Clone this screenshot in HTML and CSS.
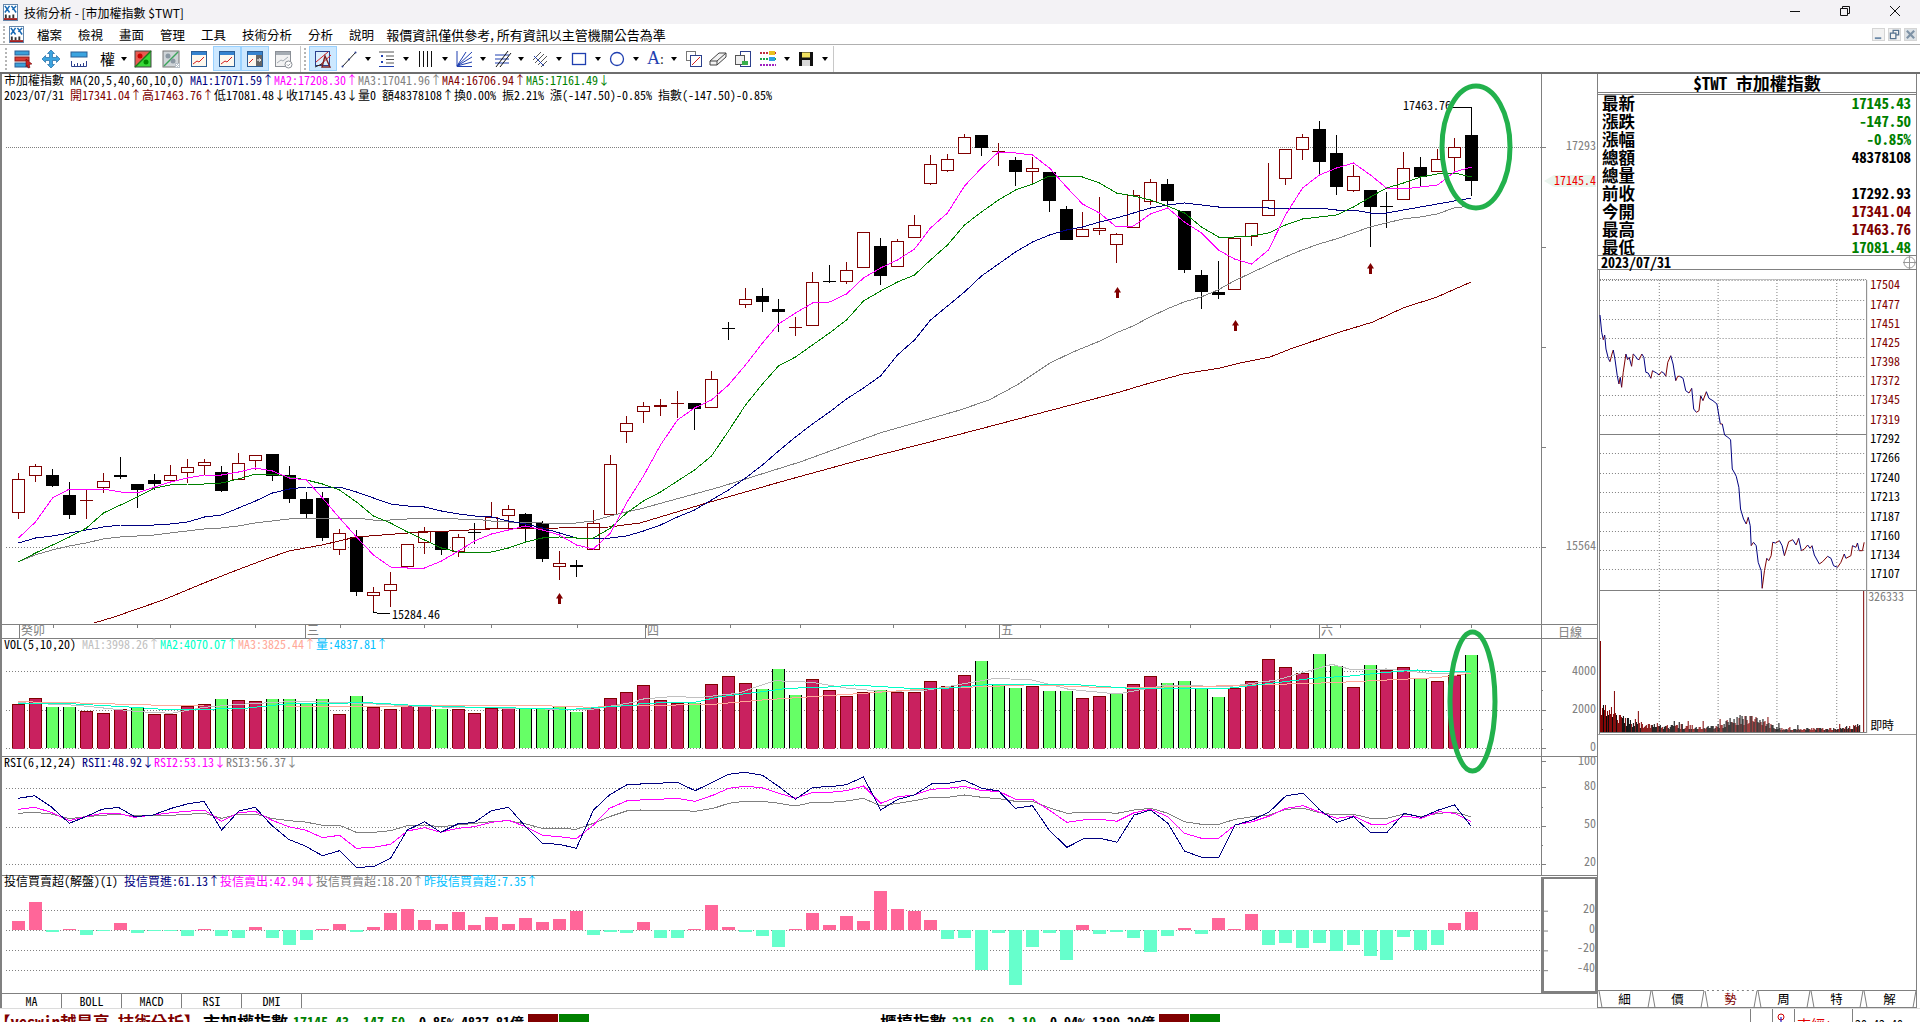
FILE: index.html
```html
<!DOCTYPE html>
<html lang="zh-Hant">
<head>
<meta charset="utf-8">
<title>技術分析 - [市加權指數 $TWT]</title>
<link rel="stylesheet" href="styles.css">
</head>
<body>
<svg class="defs" width="0" height="0">
  <symbol id="app" viewBox="0 0 16 18">
    <rect x=".5" y=".5" width="15" height="17" fill="#fff" stroke="#5b7fa6"/>
    <path d="M2 2l5 7M7 2L2 9M9 2l5 7M14 2l-4 4" stroke="#1769b5" stroke-width="1.6" fill="none"/>
    <path d="M2 15V11h2v4zM6 15v-3h2v3zM10 15v-4h2v4z" fill="#333"/>
    <rect x="1" y="15" width="14" height="2" fill="#a02020"/>
  </symbol>
  <symbol id="win" viewBox="0 0 20 20">
    <rect x="2.5" y="2.5" width="15" height="15" fill="#fdf8ee" stroke="#2b5e96"/>
    <rect x="3" y="3" width="14" height="3" fill="#3583cf"/>
    <path d="M4 15l4-3 2 1 5-5" stroke="#d62020" fill="none"/>
  </symbol>
  <symbol id="caret" viewBox="0 0 8 8"><path d="M1 2h6L4 6z" fill="#000"/></symbol>
</svg>

<header class="titlebar">
  <svg class="app-ico"><use href="#app"/></svg>
  <span class="title-text">技術分析 - [市加權指數 $TWT]</span>
  <div class="winctl">
    <svg viewBox="0 0 10 10"><path d="M0 5.5h10" stroke="#111"/></svg>
    <svg viewBox="0 0 10 10"><path d="M.5 2.5h7v7h-7zM2.5 2.5V.5h7v7h-2" fill="none" stroke="#111"/></svg>
    <svg viewBox="0 0 10 10"><path d="M0 0l10 10M10 0L0 10" stroke="#111"/></svg>
  </div>
</header>

<nav class="menubar">
  <span class="grip"></span>
  <svg class="app-ico"><use href="#app"/></svg>
  <span class="menu first">檔案</span><span class="menu">檢視</span><span class="menu">畫面</span><span class="menu">管理</span><span class="menu">工具</span><span class="menu">技術分析</span><span class="menu">分析</span><span class="menu">說明</span>
  <span class="menu notice">報價資訊僅供參考, 所有資訊以主管機關公告為準</span>
  <div class="mdi">
    <span class="mdi-btn"><svg viewBox="0 0 12 12"><path d="M2 9h7v2H2z" fill="#6c8aa8"/></svg></span>
    <span class="mdi-btn"><svg viewBox="0 0 12 12"><path d="M1.5 4.5h6v6h-6zM4.5 4.5v-3h6v5h-3" fill="none" stroke="#55728f" stroke-width="1.4"/></svg></span>
    <span class="mdi-btn on"><svg viewBox="0 0 12 12"><path d="M2 2l8 8M10 2l-8 8" stroke="#7f93a6" stroke-width="2.4"/></svg></span>
  </div>
</nav>

<div class="toolbar">
  <span class="grip"></span>
  <span class="tb"><svg viewBox="0 0 20 20"><rect x="2" y="2" width="14" height="4" fill="#39a0d8" stroke="#2b5e96"/><rect x="2" y="8" width="14" height="4" fill="#d83a32" stroke="#8a1c1c"/><rect x="2" y="14" width="14" height="4" fill="#39a0d8" stroke="#2b5e96"/><path d="M13 10l6 5-3 .5 1 3-2 .5-1-3-1 2z" fill="#c22" stroke="#600" stroke-width=".5"/></svg></span>
  <span class="tb"><svg viewBox="0 0 20 20"><path d="M10 1l3.500 3.500H11.500V8.500H15.500V6.500L19 10l-3.500 3.500V11.500H11.500V15.500H13.500L10 19l-3.500-3.500H8.500V11.500H4.500V13.500L1 10l3.500-3.500V8.500H8.500V4.500H6.500z" fill="#3ba4e0" stroke="#1f6aa5" stroke-width=".7"/></svg></span>
  <span class="tb"><svg viewBox="0 0 20 20"><rect x="2" y="3" width="16" height="5" fill="#3ba4e0" stroke="#2b5e96"/><path d="M2.500 12v5.500h15V12M5.500 17v-2M8.500 17v-3M11.500 17v-2M14.500 17v-3" fill="none" stroke="#2b3f8c"/></svg></span>
  <span class="tb dd narrow"><span class="tb-txt">權</span><svg class="caret"><use href="#caret"/></svg></span>
  <span class="tb"><svg viewBox="0 0 20 20"><path d="M2 2h16L2 18z" fill="#e85a50"/><path d="M18 2v16H2z" fill="#38d838"/><rect x="2" y="2" width="16" height="16" fill="none" stroke="#444"/><path d="M2 18L18 2" stroke="#1a7a1a" stroke-width="1.400"/><circle cx="7" cy="7" r="2.500" fill="#c00"/><circle cx="13" cy="13" r="2.500" fill="#080"/></svg></span>
  <span class="tb"><svg viewBox="0 0 20 20"><rect x="2" y="2" width="16" height="16" fill="#cfd4d8" stroke="#777"/><path d="M3 17L17 3" stroke="#3ba35a" stroke-width="1.400"/><circle cx="7" cy="7" r="2.500" fill="#8b98a3"/><circle cx="12" cy="12" r="2.500" fill="#8b98a3"/><path d="M14 14h5v5h-5z" fill="#b8c0c8"/><path d="M15 15l3 3M18 15l-3 3" stroke="#fff"/></svg></span>
  <span class="tb"><svg viewBox="0 0 20 20"><use href="#win"/></svg></span>
  <span class="tb on"><svg viewBox="0 0 20 20"><use href="#win"/></svg></span>
  <span class="tb on"><svg viewBox="0 0 20 20"><rect x="2.500" y="2.500" width="15" height="15" fill="#fdf8ee" stroke="#2b5e96"/><rect x="3" y="3" width="14" height="3" fill="#3583cf"/><rect x="11" y="6" width="6" height="11" fill="#666"/><path d="M4 14l4-4" stroke="#d62020"/><path d="M12 11h3M14 9.500l2 1.500-2 1.500" stroke="#fff" fill="none"/></svg></span>
  <span class="tb"><svg viewBox="0 0 20 20"><rect x="2.500" y="2.500" width="15" height="15" fill="#f2f2f2" stroke="#8a8f96"/><rect x="3" y="3" width="14" height="3" fill="#a5acb3"/><path d="M4 14l4-3 2 1 5-4" stroke="#a5acb3" fill="none"/><circle cx="15.500" cy="15.500" r="3.500" fill="#fff" stroke="#8a8f96"/><path d="M14 15.500l1.200 1.200 2-2" stroke="#8a8f96" fill="none"/></svg></span>
  <span class="sep"></span>
  <span class="grip"></span>
  <span class="tb on"><svg viewBox="0 0 20 20"><rect x="2.500" y="2.500" width="14" height="14" fill="#dbeefc" stroke="#2b3f8c"/><path d="M3 13L15 3M6 17L18 6" stroke="#d62020"/><path d="M12 7l5 11H9z" fill="none" stroke="#7a2020" stroke-width="1.400"/><path d="M2 18l7-3" stroke="#222"/></svg></span>
  <span class="tb dd"><svg viewBox="0 0 20 20"><path d="M3 18L17 3" stroke="#222"/><circle cx="3.500" cy="17.500" r="1" fill="#2b3f8c"/><circle cx="10" cy="10.500" r="1" fill="#2b3f8c"/><circle cx="16.500" cy="3.500" r="1" fill="#2b3f8c"/></svg><svg class="caret"><use href="#caret"/></svg></span>
  <span class="tb dd"><svg viewBox="0 0 20 20"><path d="M2 3h15M9 7h8M9 10.500h8M9 14h8" stroke="#555"/><path d="M2 17.500h15" stroke="#1f3fb0"/><path d="M4 6l2 2M4 8l2-2M4 12l2 2M4 14l2-2" stroke="#1f3fb0"/></svg><svg class="caret"><use href="#caret"/></svg></span>
  <span class="tb dd"><svg viewBox="0 0 20 20"><path d="M3.500 2v16M7.500 2v16M11.500 2v16M15.500 2v16" stroke="#111"/></svg><svg class="caret"><use href="#caret"/></svg></span>
  <span class="tb dd"><svg viewBox="0 0 20 20"><path d="M3 2v15.500h15" stroke="#1f3fb0" fill="none"/><path d="M3 17L18 3M3 17L18 8M3 17L18 13M3 17L12 3" stroke="#1f3fb0"/></svg><svg class="caret"><use href="#caret"/></svg></span>
  <span class="tb dd"><svg viewBox="0 0 20 20"><path d="M3 6h14M3 10h14M3 14h14" stroke="#1f3fb0"/><path d="M4 18L16 2M8 18L19 4" stroke="#111"/></svg><svg class="caret"><use href="#caret"/></svg></span>
  <span class="tb dd"><svg viewBox="0 0 20 20"><path d="M3 11L11 3M5 14L14 5M8 16l9-9M11 18l6-6" stroke="#555"/><path d="M4 7l10 10" stroke="#1f3fb0"/></svg><svg class="caret"><use href="#caret"/></svg></span>
  <span class="tb dd"><svg viewBox="0 0 20 20"><rect x="3.500" y="4.500" width="13" height="11" fill="none" stroke="#1f3fb0" stroke-width="1.300"/></svg><svg class="caret"><use href="#caret"/></svg></span>
  <span class="tb dd"><svg viewBox="0 0 20 20"><circle cx="10" cy="10" r="6.500" fill="none" stroke="#1f3fb0" stroke-width="1.300"/></svg><svg class="caret"><use href="#caret"/></svg></span>
  <span class="tb dd"><span class="tb-a">A<i>:</i></span><svg class="caret"><use href="#caret"/></svg></span>
  <span class="tb single"><svg viewBox="0 0 20 20"><rect x="2.500" y="2.500" width="9" height="9" fill="#fff" stroke="#777"/><rect x="6.500" y="6.500" width="11" height="11" fill="#fff" stroke="#2b3f8c"/><path d="M8 16l8-8" stroke="#d62020"/></svg></span>
  <span class="tb tight"><svg viewBox="0 0 20 20"><path d="M2 12l9-8h7v4l-9 8H2z" fill="#f2f2f2" stroke="#444"/><path d="M2 12h7v4M9 12l9-8" fill="none" stroke="#444"/></svg></span>
  <span class="tb tight"><svg viewBox="0 0 20 20"><rect x="7.500" y="2.500" width="10" height="15" fill="#fff" stroke="#2b3f8c"/><rect x="2.500" y="6.500" width="9" height="9" fill="#eee" stroke="#555"/><path d="M9 12h6v4H9z" fill="#38b04a"/></svg></span>
  <span class="tb dd"><svg viewBox="0 0 20 20"><g stroke-width="2" stroke-dasharray="2 1"><path d="M2 4h16" stroke="#c03040"/><path d="M2 10h16" stroke="#1aa64a"/><path d="M2 16h16" stroke="#a020c0"/></g><path d="M11 2h6v4h-6z" fill="#e8c020"/><path d="M11 8h6v4h-6z" fill="#2aa0e0"/></svg><svg class="caret"><use href="#caret"/></svg></span>
  <span class="tb dd"><svg viewBox="0 0 20 20"><rect x="3" y="3" width="14" height="14" fill="#111"/><rect x="6" y="3.500" width="8" height="5" fill="#f0e060"/><rect x="6" y="11" width="8" height="6" fill="#d8d8d8"/></svg><svg class="caret"><use href="#caret"/></svg></span>
  <span class="sep end"></span>
</div>

<main class="workspace">
  <section class="charts">
    <div class="pane pane-main">
      <div class="plot">
        <svg id="mainPlot" viewBox="2 74 1539 550" preserveAspectRatio="none"></svg>
        <div class="legend">市加權指數 MA(20,5,40,60,10,0) <span class="c-navy">MA1:17071.59↑</span><span class="c-mag">MA2:17208.30↑</span><span class="c-gray">MA3:17041.96↑</span><span class="c-dred">MA4:16706.94↑</span><span class="c-green">MA5:17161.49↓</span></div>
        <div class="legend">2023/07/31 <span class="c-dred">開17341.04↑高17463.76↑</span>低17081.48↓收17145.43↓量0 額48378108↑換0.00% 振2.21% 漲(-147.50)-0.85% 指數(-147.50)-0.85%</div>
      </div>
      <div class="axis"><svg id="mainAxis" viewBox="1542 74 55 550" preserveAspectRatio="none"></svg></div>
    </div>
    <div class="pane pane-date">
      <div class="plot"><svg id="datePlot" viewBox="2 625 1539 13" preserveAspectRatio="none"></svg></div>
      <div class="axis daily">日線</div>
    </div>
    <div class="pane pane-sub pane-vol">
      <div class="plot">
        <svg id="volPlot" viewBox="2 639 1539 117" preserveAspectRatio="none"></svg>
        <div class="legend">VOL(5,10,20) <span class="c-silver">MA1:3998.26↑</span><span class="c-cyan">MA2:4070.07↑</span><span class="c-salmon">MA3:3825.44↑</span><span class="c-sky">量:4837.81↑</span></div>
      </div>
      <div class="axis"><svg id="volAxis" viewBox="1542 639 55 117" preserveAspectRatio="none"></svg></div>
    </div>
    <div class="pane pane-sub pane-rsi">
      <div class="plot">
        <svg id="rsiPlot" viewBox="2 757 1539 118" preserveAspectRatio="none"></svg>
        <div class="legend">RSI(6,12,24) <span class="c-navy">RSI1:48.92↓</span><span class="c-mag">RSI2:53.13↓</span><span class="c-gray">RSI3:56.37↓</span></div>
      </div>
      <div class="axis"><svg id="rsiAxis" viewBox="1542 757 55 118" preserveAspectRatio="none"></svg></div>
    </div>
    <div class="pane pane-sub pane-inst">
      <div class="plot">
        <svg id="instPlot" viewBox="2 876 1539 117" preserveAspectRatio="none"></svg>
        <div class="legend">投信買賣超(解盤)(1) <span class="c-navy">投信買進:61.13↑</span><span class="c-mag">投信賣出:42.94↓</span><span class="c-gray">投信買賣超:18.20↑</span><span class="c-sky">昨投信買賣超:7.35↑</span></div>
      </div>
      <div class="axis boxed"><svg id="instAxis" viewBox="1544 878 51 113" preserveAspectRatio="none"></svg></div>
    </div>
    <div class="ind-tabs">
      <span class="ind-tab">MA</span><span class="ind-tab">BOLL</span><span class="ind-tab">MACD</span><span class="ind-tab">RSI</span><span class="ind-tab">DMI</span>
    </div>
    <svg class="marks" viewBox="0 74 1597 934" preserveAspectRatio="none">
      <ellipse cx="1476" cy="147" rx="34" ry="61"/>
      <ellipse cx="1472.500" cy="701.500" rx="22.500" ry="69.500"/>
    </svg>
  </section>

  <aside class="side">
    <h2 class="q-title">$TWT 市加權指數</h2>
    <dl class="quote">
      <div class="q-row"><dt>最新</dt><dd class="c-green">17145.43</dd></div>
      <div class="q-row"><dt>漲跌</dt><dd class="c-green">-147.50</dd></div>
      <div class="q-row"><dt>漲幅</dt><dd class="c-green">-0.85%</dd></div>
      <div class="q-row"><dt>總額</dt><dd>48378108</dd></div>
      <div class="q-row"><dt>總量</dt><dd></dd></div>
      <div class="q-row"><dt>前收</dt><dd>17292.93</dd></div>
      <div class="q-row"><dt>今開</dt><dd class="c-dred">17341.04</dd></div>
      <div class="q-row"><dt>最高</dt><dd class="c-dred">17463.76</dd></div>
      <div class="q-row"><dt>最低</dt><dd class="c-green">17081.48</dd></div>
    </dl>
    <div class="q-date"><span>2023/07/31</span>
      <svg viewBox="0 0 13 13"><circle cx="6.500" cy="6.500" r="5.500" fill="none" stroke="#999"/><path d="M6.500 0v13M0 6.500h13" stroke="#999"/></svg>
    </div>
    <div class="mini"><svg id="mini" viewBox="1598 271 319 464" preserveAspectRatio="none"></svg></div>
    <div class="side-blank"></div>
    <div class="side-tabs">
      <svg viewBox="0 0 319 18" preserveAspectRatio="none"><path id="tabLines" d=""/><path id="tabActive" d=""/></svg>
      <span class="s-tab">細</span><span class="s-tab">價</span><span class="s-tab active">勢</span><span class="s-tab">周</span><span class="s-tab">特</span><span class="s-tab">解</span>
    </div>
  </aside>
</main>

<footer class="status">
  <span class="st-brand">【yeswin越是高-技術分析】</span>
  <span class="st-name">市加權指數</span>
  <span class="st-num"><span class="c-green">17145.43 -147.50</span> -0.85% 4837.81億</span>
  <span class="st-bars"><i class="b-red"></i><i class="b-green"></i></span>
  <span class="st-name second">櫃檯指數</span>
  <span class="st-num"><span class="c-green">221.69 -2.10</span> -0.94% 1389.20億</span>
  <span class="st-bars small"><i class="b-red"></i><i class="b-green"></i></span>
  <span class="st-right">
    <span class="st-cell w22"></span>
    <span class="st-cell w22"><svg viewBox="0 0 12 12"><circle cx="6" cy="4" r="3" fill="none" stroke="#c00"/><path d="M6 4v7" stroke="#00c"/></svg></span>
    <span class="st-cell w58 c-red">東經+</span>
    <span class="st-cell">20:42:40</span>
  </span>
</footer>
<script src="chart.js"></script>
</body>
</html>
```
FILE: styles.css
```css
* { box-sizing: border-box; }
html, body { margin: 0; padding: 0; }
body {
  width: 1920px; height: 1022px; overflow: hidden; background: #fff; color: #000;
  display: flex; flex-direction: column;
  font: 12px/15px "Noto Sans CJK TC", "Liberation Mono", monospace;
  font-feature-settings: "hwid";
}
.defs { position: absolute; }
svg text { font: 12px "Noto Sans CJK TC", "Liberation Mono", monospace; font-feature-settings: "hwid"; }
.ln { fill: none; stroke-width: 1; shape-rendering: crispEdges; }

.titlebar { height: 24px; flex: none; background: #f3f2f5; display: flex; align-items: center; padding-left: 3px; font-feature-settings: normal; }
.app-ico { width: 15px; height: 17px; flex: none; }
.title-text { margin-left: 6px; font-size: 12px; }
.winctl { margin-left: auto; display: flex; }
.winctl svg { width: 10px; height: 10px; margin: 0 20px 2px 20px; }
.winctl svg:last-child { margin-right: 20px; }

.menubar { height: 21px; flex: none; display: flex; align-items: center; padding-left: 3px; border-bottom: 1px solid #b0b0b0; font-feature-settings: normal; }
.menubar .app-ico { margin-left: 4px; }
.menu { font-size: 12.500px; margin-left: 16px; white-space: nowrap; }
.menu.first { margin-left: 13px; }
.menu.notice { font-size: 13px; margin-left: 12px; }
.grip { width: 2px; height: 17px; flex: none; border-left: 2px dotted #b5b5b5; }
.mdi { margin-left: auto; margin-right: 3px; display: flex; gap: 3px; padding-top: 1px; }
.mdi-btn { width: 13px; height: 13px; border: 1px solid #d5d5d5; background: #f2f2f2; display: flex; }
.mdi-btn.on { background: #dde2e6; }
.mdi-btn svg { width: 11px; height: 11px; }

.toolbar { height: 27px; flex: none; display: flex; align-items: center; padding-left: 5px; }
.toolbar > .grip { height: 22px; margin-right: 2px; }
.tb { height: 25px; width: 28px; flex: none; display: flex; align-items: center; justify-content: center; border: 1px solid transparent; }
.tb svg { width: 20px; height: 20px; flex: none; }
.tb.on { background: #cce8ff; border-color: #99d1ff; }
.tb.dd { width: 38.300px; justify-content: flex-start; padding-left: 1px; }
.tb.narrow { width: 36px; padding-left: 6px; }
.tb .caret { width: 8px; height: 8px; margin-left: 5px; }
.tb.single { width: 24px; }
.tb.tight { width: 25px; }
.tb-txt { font-size: 15px; line-height: 20px; width: 20px; text-align: center; font-feature-settings: normal; }
.tb-a { width: 20px; font: 18px/20px "Liberation Serif", serif; color: #1f3fb0; text-align: center; }
.tb-a i { font-style: normal; color: #222; font-size: 14px; }
.sep { width: 1px; height: 26px; background: #c8c8c8; margin: 0 3px; flex: none; }
.toolbar > .sep + .grip { margin-right: 3px; }
.sep.end { margin-left: 1px; }

.workspace { height: 936px; flex: none; display: flex; border-top: 2px solid #6e6e6e; }
.charts { width: 1597px; flex: none; display: flex; flex-direction: column; position: relative; border-left: 2px solid #808080; }
.pane { display: flex; flex: none; border-bottom: 1px solid #808080; }
.pane-main { height: 551px; }
.pane-date { height: 14px; }
.pane-vol { height: 118px; }
.pane-rsi { height: 119px; }
.pane-inst { height: 118px; }
.plot { width: 1539px; flex: none; position: relative; padding-left: 2px; }
.plot svg { position: absolute; left: 0; top: 0; width: 100%; height: 100%; }
.axis { width: 56px; flex: none; border-left: 1px solid #808080; position: relative; color: #808080; }
.axis svg { position: absolute; left: 0; top: 0; width: 100%; height: 100%; }
.axis.daily { text-align: center; padding-left: 1px; line-height: 13px; }
.axis.boxed { border: 2px solid #808080; border-left-width: 3px; margin: 1px 0 0 0; }
.legend { position: relative; white-space: pre; line-height: 14.500px; top: -1px; }
.pane-sub .legend { line-height: 13px; top: -2px; }

.ind-tabs { flex: 1; display: flex; }
.ind-tab { width: 60px; border-right: 1px solid #808080; text-align: center; line-height: 14px; }
.marks { position: absolute; left: -2px; top: 0; width: 1597px; height: 934px; pointer-events: none; }
.marks ellipse { fill: none; stroke: #22b14c; stroke-width: 5; }

.side { width: 320px; flex: none; border-left: 1px solid #808080; border-right: 1px solid #808080; display: flex; flex-direction: column; }
.q-title { margin: 0; height: 19px; font-size: 17px; line-height: 17px; font-weight: 700; text-align: center; border-bottom: 1px solid #808080; }
.quote { margin: 1px 0 0 0; height: 161px; border-top: 1px solid #808080; display: grid; grid-template-rows: repeat(9, 1fr); }
.q-row { display: flex; justify-content: space-between; align-items: center; padding: 0 5px 2px 4px; }
.q-row dt { font-size: 16.500px; font-weight: 700; line-height: 16px; }
.q-row dd { margin: 0; font-size: 15px; font-weight: 700; letter-spacing: -.1px; line-height: 16px; }
.q-date { height: 15px; flex: none; border-top: 1px solid #808080; border-bottom: 1px solid #808080; display: flex; justify-content: space-between; align-items: center; padding-left: 3px; font-size: 14px; font-weight: 700; }
.q-date svg { width: 13px; height: 13px; }
.mini { height: 464px; flex: none; position: relative; }
.mini svg { position: absolute; left: 0; top: 0; width: 100%; height: 100%; }
.side-blank { flex: 1; border-top: 1px solid #9a9a9a; }
.side-tabs { height: 18px; flex: none; position: relative; display: flex; }
.side-tabs svg { position: absolute; left: 0; top: 0; width: 100%; height: 100%; }
.side-tabs path { fill: none; stroke: #808080; shape-rendering: crispEdges; }
.side-tabs #tabActive { stroke: #fff; stroke-dasharray: 3 2; }
.s-tab { flex: 1; text-align: center; line-height: 18px; position: relative; font-size: 12.500px; }
.s-tab.active { color: #800000; }

.status { height: 14px; flex: none; border-top: 1px solid #dcdcdc; display: flex; align-items: flex-start; overflow: hidden; position: relative; font-weight: 700; white-space: nowrap; }
.st-brand { color: #800000; font-size: 16.500px; line-height: 20px; width: 209px; margin-left: -6px; flex: none; margin-top: 3px; }
.st-name { font-size: 17px; line-height: 20px; margin-top: 3px; width: 90px; flex: none; }
.st-name.second { font-size: 16.500px; width: 72px; margin-left: 291px; }
.st-num { font-size: 14px; line-height: 20px; margin-top: 3px; }
.st-bars { display: flex; margin: 5px 0 0 4px; gap: 1px; }
.st-bars i { width: 30px; height: 8px; display: block; }
.b-red { background: #800000; }
.b-green { background: #008000; }
.st-right { position: absolute; left: 1750px; top: 0; display: flex; height: 14px; font-weight: 400; }
.st-cell { border-left: 1px solid #808080; padding-left: 2px; line-height: 20px; padding-top: 5px; font-size: 12px; }
.st-cell svg { width: 12px; height: 12px; display: block; margin-top: -1px; }
.w22 { width: 22px; }
.w58 { width: 58px; font-size: 14px; }

.c-navy { color: #000080; }
.c-mag { color: #ff00ff; }
.c-gray { color: #808080; }
.c-dred { color: #800000; }
.c-green { color: #008000; }
.c-red { color: #e00000; }
.c-silver { color: #c0c0c0; }
.c-cyan { color: #00ffc8; }
.c-salmon { color: #ffa898; }
.c-sky { color: #00bfff; }
```
FILE: chart.js
```js
// Price and indicator data, given in screen pixels of the chart.
const R = '#800000', B = '#000';
const X = i => Math.round(18.4 + 16.89 * i);
const z3 = (p) => [p[0] / 2.45, 600 + p[1] / 3];
const z8 = (p) => [640 + p[0] / 1.633, 640 + p[1] / 3];

// [kind, bodyTop, bodyBottom, wickTop, wickBottom]
const candles = [
['r',479,512,473,519],['r',466,475,464,482],['b',475,486,469,487],['b',495,515,482,519],['r',500,500,490,519],
['r',481,487,473,493],['b',475,477,457,479],['b',484,490,484,508],['b',480,484,474,490],['r',475,480,465,483],
['r',467,472,459,483],['r',462,465,459,475],['b',472,491,466,492],['r',463,479,453,480],['r',455,460,455,470],
['b',454,476,454,481],['b',475,499,466,503],['b',499,514,492,518],['b',498,538,492,541],['r',533,549,529,555],
['b',537,592,530,596],['r',592,595,587,612],['r',584,590,572,607],['r',544,566,544,566],['r',531,542,527,554],
['b',532,550,532,555],['r',537,551,534,557],['b',532,532,523,544],['r',517,528,502,528],['r',509,515,505,529],
['b',514,529,513,543],['b',523,559,521,562],['r',563,566,551,580],['b',565,567,560,577],['r',523,549,510,549],
['r',464,514,455,514],['r',423,431,416,443],['r',406,411,402,423],['r',405,406,399,416],['r',403,403,391,418],
['b',403,409,403,430],['r',379,407,371,407],['b',328,328,322,340],['r',299,304,288,308],['b',296,302,288,312],
['b',309,312,299,332],['r',327,327,317,336],['r',282,325,272,325],['b',281,281,265,283],['r',270,281,262,284],
['r',232,267,232,267],['b',246,276,238,285],['r',241,266,239,266],['r',225,237,215,237],['r',164,183,155,185],
['r',159,170,154,172],['r',137,153,134,153],['b',135,148,135,156],['r',151,151,143,166],['b',160,172,157,186],
['r',168,171,157,184],['b',172,201,172,212],['b',209,240,206,240],['r',229,236,212,237],['r',228,230,197,235],
['r',234,244,233,263],['r',195,227,190,227],['r',182,201,179,205],['b',184,201,179,207],['b',211,270,211,273],
['b',275,292,270,309],['b',292,295,261,299],['r',238,289,238,289],['r',223,236,223,246],['r',200,215,163,215],
['r',149,178,149,185],['r',137,149,134,160],['b',129,162,121,175],['b',153,187,135,195],['r',176,190,165,192],
['b',190,207,190,247],['b',206,206,192,228],['r',168,199,152,199],['b',167,177,157,186],['r',159,171,149,171],
['r',147,157,138,172],['b',135,181,107,196]];

const ma2 = [538,522,498,489,489,489,492,493,487,482,478,475,475,472,468,471,478,480,498,518,537,555,567,568,568,561,551,541,534,530,526,530,535,545,549,533,503,476,445,420,408,400,385,365,343,324,313,303,302,294,278,268,260,249,228,213,186,168,152,153,155,168,187,204,213,227,226,214,208,222,233,250,259,264,250,215,188,175,168,163,175,188,189,187,185,172,167];
const ma5 = [562,553,545,537,528,513,505,497,488,485,484,484,483,479,474,474,477,480,484,490,502,516,523,532,540,548,552,553,552,548,542,538,537,538,538,528,513,501,492,481,470,456,431,405,384,366,357,345,333,320,301,291,282,275,260,245,225,212,200,190,184,176,176,177,183,193,196,200,206,213,227,237,237,236,233,225,219,217,215,207,197,188,183,177,174,173,177];
const ma1 = [543,538,536,533,530,527,525,525,525,524,522,517,515,508,501,493,489,487,487,487,492,498,504,506,507,511,514,516,517,521,524,528,533,538,539,538,536,531,525,517,510,500,490,478,465,451,437,424,412,399,388,376,355,340,320,306,292,276,264,252,242,235,230,227,222,218,213,208,205,203,205,207,207,207,208,208,208,208,210,210,213,213,210,207,204,201,198];
const ma3a = [562,555,550,546,543,539,537,536,535,533,531,529,528,526,523,521,519,518,518,518,518,520,520,519,518,518,519,519,521,522,522,523,524,523,521,516,512];
const ma3b = [[640,509],[720,487],[800,462],[880,433],[960,410],[989,400],[1017,385],[1050,363],[1073,352],[1100,341],[1116,333]];
const ma3c = [326,317,309,302,297,290,281,273,265,257,250,244,239,233,227,223,219,217,214,208,206];
const ma4 = [[94,623],[114,617],[163,600],[204,583],[237,570],[269,558],[289,551],[322,545],[356,537],[408,533],[449,531],[490,529],[559,528],[609,527],[640,523],[700,505],[780,482],[860,460],[980,429],[1090,400],[1120,392],[1133,388],[1150,383],[1183,374],[1220,368],[1240,363],[1270,357],[1293,348],[1340,332],[1373,322],[1403,308],[1437,297],[1471,282]];

const volTop = [704,698,707,707,711,713,709,708,714,714,706,704,699,700,701,699,699,703,699,714,696,707,709,705,706,709,709,713,708,708,709,709,706,712,707,698,692,685,700,703,703,684,676,683,689,669,695,679,690,696,692,690,692,692,681,686,675,661,685,688,686,691,691,698,696,693,684,676,683,681,688,697,688,681,659,667,673,654,666,687,665,670,667,679,681,675,655];
const volKind = 'rrggrrrgrrrrgrrggggrgrrrrgrrrrggggrrrrrrgrrrgggrrrrgrrrrrgggrggrrgrrggggrrrrrggrgrrgrrg';
const inst = [9,28,-2,.7,-5,-1,7,-3,-1,-1,-6,1,-6,-8,3,-8,-15,-10,1,6,-2,3,17,21,10,6,18,5,13,6,12,8,11,19,-5,-2,-3,8,-8,-8,1,25,3,-2,-6,-17,.7,17,5,14,9,39,21,19,10,-9,-8,-40,-3,-55,-17,-3,-30,5,-4,-2,-8,-22,-6,2,-4,12,1,16,-15,-13,-18,-13,-21,-15,-26,-30,-7,-20,-15,7,18];

const volLines = {
  '#c0c0c0': [[[45,308],[190,316],[340,335],[420,340],[500,322],[600,312],[740,303],[920,312],[1040,320],[1260,325],[1440,330],[1560,305]].map(z3),
              [[0,178],[50,170],[100,172],[160,160],[220,122],[280,127],[340,145],[400,155],[470,150],[580,115],[640,120],[700,148],[780,162],[860,135],[960,140],[1040,120],[1130,73],[1160,88],[1220,87],[1300,102],[1357,95]].map(z8)],
  '#ffa898': [[[45,305],[230,310],[330,314],[500,318],[700,318],[1000,318],[1300,316],[1450,322],[1560,315]].map(z3),
              [[0,197],[120,193],[200,180],[280,170],[380,158],[480,145],[560,140],[640,134],[760,143],[900,140],[1000,135],[1130,128],[1220,120],[1300,113],[1357,100]].map(z8)],
  '#00ffc8': [[[45,311],[185,312],[330,322],[420,330],[600,325],[700,312],[900,308],[1000,315],[1100,320],[1300,325],[1400,328],[1560,315]].map(z3),
              [[0,190],[90,187],[130,170],[200,155],[240,145],[300,142],[350,135],[440,145],[500,145],[560,135],[640,133],[720,135],[800,145],[900,145],[960,145],[1020,132],[1100,115],[1160,108],[1220,97],[1270,90],[1310,95],[1357,95]].map(z8)]
};

const rsi = {
  '#808080': [[[45,640],[85,637],[125,642],[170,656],[210,650],[250,646],[290,643],[330,648],[375,646],[420,646],[459,643],[500,640],[543,655],[585,642],[625,642],[665,655],[707,662],[748,666],[790,676],[832,676],[873,697],[915,697],[957,692],[998,677],[1040,675],[1080,680],[1121,675],[1163,670],[1204,665],[1246,662],[1288,672],[1329,685],[1370,685],[1412,688],[1454,670],[1493,650],[1535,633],[1568,630]].map(z3),
    [[0,511],[30,511],[60,511],[90,514],[120,505],[145,490],[172,484],[200,484],[227,490],[254,498],[282,487],[310,487],[337,483],[365,475],[393,498],[421,490],[448,482],[476,472],[503,472],[530,465],[558,472],[586,476],[613,484],[641,484],[668,503],[697,520],[724,517],[752,517],[779,520],[807,510],[834,505],[862,520],[889,545],[917,553],[945,553],[972,538],[1000,530],[1028,525],[1055,508],[1083,505],[1110,518],[1138,525],[1165,523],[1193,535],[1220,535],[1248,522],[1276,530],[1304,520],[1330,517],[1357,530]].map(z8)],
  '#ff00ff': [[[45,628],[85,622],[125,637],[170,662],[210,650],[250,640],[290,640],[330,652],[375,645],[420,638],[459,634],[500,630],[543,664],[585,638],[625,634],[665,660],[707,680],[748,690],[790,713],[832,706],[873,745],[915,742],[957,733],[998,693],[1040,683],[1080,697],[1121,685],[1163,680],[1204,667],[1246,661],[1288,680],[1329,706],[1370,710],[1412,716],[1454,675],[1493,625],[1535,603],[1568,600]].map(z3),
    [[0,478],[30,478],[60,475],[90,484],[120,465],[145,445],[172,439],[200,443],[227,460],[254,475],[282,457],[310,457],[337,452],[365,438],[393,490],[421,470],[448,465],[476,448],[503,445],[530,439],[558,452],[586,454],[613,478],[641,478],[668,510],[697,547],[724,540],[752,538],[779,544],[807,518],[834,508],[862,530],[889,580],[917,595],[945,595],[972,555],[1000,545],[1028,528],[1055,505],[1083,497],[1110,517],[1138,535],[1165,528],[1193,552],[1220,552],[1248,528],[1276,535],[1304,515],[1330,520],[1357,545]].map(z8)],
  '#000080': [[[45,595],[85,587],[125,620],[170,670],[210,650],[250,628],[290,622],[330,650],[375,645],[420,625],[459,612],[500,604],[543,690],[585,633],[625,622],[665,675],[707,718],[748,738],[790,767],[832,752],[873,802],[915,800],[957,775],[998,690],[1040,665],[1080,697],[1121,672],[1163,667],[1204,632],[1246,622],[1288,680],[1329,730],[1370,733],[1412,745],[1454,630],[1493,585],[1535,555],[1568,553]].map(z3),
    [[0,430],[30,430],[60,426],[90,452],[120,425],[145,403],[172,397],[200,406],[227,440],[254,478],[282,442],[310,440],[337,434],[365,411],[393,510],[421,478],[448,465],[476,432],[503,430],[530,421],[558,445],[586,453],[613,505],[641,497],[668,570],[697,622],[724,597],[752,595],[779,607],[807,525],[834,510],[862,550],[889,633],[917,652],[945,652],[972,555],[1000,540],[1028,515],[1055,467],[1083,460],[1110,510],[1138,547],[1165,530],[1193,577],[1220,577],[1248,520],[1276,532],[1304,510],[1330,495],[1357,558]].map(z8)]
};

const tick = [[30,138],[35,190],[40,212],[44,198],[48,240],[55,268],[60,278],[66,255],[70,243],[75,270],[82,320],[87,345],[91,325],[95,355],[100,310],[108,255],[113,272],[118,265],[125,292],[130,255],[137,262],[142,270],[148,272],[156,255],[162,265],[168,310],[175,312],[183,328],[188,305],[200,312],[208,318],[215,308],[222,312],[228,322],[234,280],[243,260],[250,285],[258,335],[264,322],[270,322],[280,328],[288,365],[298,372],[306,358],[312,420],[320,430],[328,425],[333,380],[340,395],[350,368],[358,388],[370,395],[382,405],[388,440],[392,465],[398,465],[405,498],[415,505],[423,512],[428,600],[435,612],[440,622],[448,655],[453,720],[462,750],[470,765],[476,745],[482,770],[485,830],[492,820],[500,830],[506,880],[515,905],[518,958],[525,905],[532,868],[538,875],[545,860],[550,820],[558,822],[570,815],[578,830],[585,860],[598,818],[610,812],[620,828],[628,808],[636,845],[645,840],[655,828],[662,838],[668,830],[675,858],[690,885],[700,878],[715,862],[725,868],[733,890],[745,895],[755,880],[765,855],[770,868],[785,860],[790,830],[800,835],[805,822],[810,845],[820,845],[825,820]].map(p => [1590 + p[0] / 3, 270 + p[1] / 3]);

const poly = (pts, color) => `<polyline class="ln" points="${pts.map(p => p.map(v => +v.toFixed(1)).join(',')).join(' ')}" stroke="${color}"/>`;
const idxLine = (ys, color) => poly(ys.map((y, i) => [X(i) + .5, y]), color);
const hLine = (x1, x2, y, color, dash) => `<path class="ln" d="M${x1} ${y + .5}H${x2}" stroke="${color}"${dash ? ` stroke-dasharray="${dash}"` : ''}/>`;
const vLine = (x, y1, y2, color) => `<path class="ln" d="M${x + .5} ${y1}V${y2}" stroke="${color}"/>`;
const rect = (x, y, w, h, fill) => `<rect x="${x}" y="${y}" width="${w}" height="${h}" fill="${fill}" shape-rendering="crispEdges"/>`;
const text = (x, y, s, color, anchor) => `<text x="${x}" y="${y}" fill="${color}" text-anchor="${anchor || 'start'}">${s}</text>`;
const arrow = (cx, top) => `<path d="M${cx + .5} ${top}l3.500 5.500h-2v5.500h-3v-5.500h-2z" fill="${R}"/>`;

const put = (id, html) => { document.getElementById(id).innerHTML = html; };

function candleSvg() {
  let s = '';
  candles.forEach((c, i) => {
    const x = X(i), col = c[0] === 'r' ? R : B;
    s += vLine(x, c[3], c[4], col);
    if (c[1] === c[2]) s += rect(x - 6, c[1], 13, 1, col);
    else if (c[0] === 'b') s += rect(x - 6, c[1], 13, c[2] - c[1], B);
    else s += `<rect x="${x - 5.5}" y="${c[1] + .5}" width="12" height="${c[2] - c[1]}" fill="#fff" stroke="${R}" shape-rendering="crispEdges"/>`;
  });
  return s;
}

function mainChart() {
  let s = hLine(6, 1541, 147, '#808080', '1 1') + hLine(6, 1541, 547, '#808080', '1 2');
  s += candleSvg();
  s += poly(ma4, R);
  s += poly(ma3a.map((y, i) => [X(i), y]).concat(ma3b, ma3c.map((y, i) => [X(i + 66), y])), '#808080');
  s += idxLine(ma1, '#000080') + idxLine(ma5, '#008000') + idxLine(ma2, '#ff00ff');
  s += arrow(559, 593) + arrow(1117, 287) + arrow(1235, 320) + arrow(1370, 263);
  s += poly([[1450, 107.5], [1471.5, 107.5], [1471.5, 110]], B) + text(1403, 110, '17463.76', B);
  s += poly([[373.5, 611], [373.5, 612.5], [380, 613.5], [390, 614]], B) + text(392, 619, '15284.46', B);
  put('mainPlot', s);

  let a = '';
  for (let y = 147; y <= 547; y += 100) a += hLine(1542, 1546, y, '#808080');
  a += `<path d="M1544 181l10-6h42v12h-42z" fill="#eaf5ee"/>`;
  a += text(1596, 150, '17293', '#808080', 'end') + text(1596, 185, '17145.4', '#f00000', 'end') + text(1596, 550, '15564', '#808080', 'end');
  put('mainAxis', a);
}

function dateAxis() {
  let s = '';
  [53, 137, 170, 255, 340, 424, 491, 577, 646, 730, 800, 893, 965, 1040, 1108, 1190, 1270, 1340, 1420, 1471].forEach(x => { s += vLine(x, 625, 628, '#808080'); });
  [[20, '癸卯'], [306, '三'], [646, '四'], [1000, '五'], [1320, '六']].forEach(d => {
    s += vLine(d[0] - 1, 625, 638, '#808080') + text(d[0] + 1, 635, d[1], '#808080');
  });
  put('datePlot', s);
}

function volPane() {
  let s = [671, 710, 748].map(y => hLine(6, 1541, y, '#808080', '1 2')).join('');
  volTop.forEach((top, i) => {
    const x = X(i), red = volKind[i] === 'r', h = 748 - top;
    s += rect(x - 6, top, 13, h, red ? '#800000' : '#000') + rect(x - 5, top + (red ? 1 : 0), 11, h, red ? '#c9215f' : '#66ff66');
  });
  Object.keys(volLines).forEach(c => { s += poly(volLines[c][0].concat(volLines[c][1]), c); });
  put('volPlot', s);
  let a = '';
  [671, 690, 710, 729, 748].forEach((y, i) => { a += hLine(1542, i % 2 ? 1543 : 1546, y, '#808080'); });
  a += text(1596, 675, '4000', '#808080', 'end') + text(1596, 713, '2000', '#808080', 'end') + text(1596, 751, '0', '#808080', 'end');
  put('volAxis', a);
}

function rsiPane() {
  let s = [788, 827, 864].map(y => hLine(6, 1541, y, '#808080', '1 2')).join('');
  Object.keys(rsi).forEach(c => { s += poly(rsi[c][0].concat(rsi[c][1]), c); });
  put('rsiPlot', s);
  let a = '';
  [761, 787, 807, 826, 845, 864].forEach((y, i) => { a += hLine(1542, (i === 2 || i === 4) ? 1543 : 1546, y, '#808080'); });
  [['100', 765], ['80', 790], ['50', 828], ['20', 866]].forEach(t => { a += text(1596, t[1], t[0], '#808080', 'end'); });
  put('rsiAxis', a);
}

function instPane() {
  let s = [910, 930, 950, 970].map(y => hLine(6, 1541, y, '#808080', '1 2')).join('');
  inst.forEach((v, i) => {
    const x = X(i) - 6, h = Math.max(1, Math.round(Math.abs(v)));
    s += v > 0 ? rect(x, 930 - h, 13, h, '#ff6699') : rect(x, 930, 13, h, '#66ffcc');
  });
  put('instPlot', s);
  let a = '';
  [[910, '20'], [930, '0'], [950, '-20'], [970, '-40']].forEach(t => {
    a += hLine(1544, 1548, t[0], '#808080') + text(1595, t[0] + 2, t[1], '#808080', 'end');
  });
  put('instAxis', a);
}

function miniChart() {
  let s = '';
  const rows = [281, 301, 320, 339, 358, 377, 396, 416, 435, 454, 474, 493, 513, 532, 551, 570];
  const labels = [17504, 17477, 17451, 17425, 17398, 17372, 17345, 17319, 17292, 17266, 17240, 17213, 17187, 17160, 17134, 17107];
  rows.forEach((y, i) => {
    if (i !== 8) s += hLine(1600, 1867, y, '#808080', '1 2');
    s += text(1871, y + 9, labels[i], i < 8 ? R : B);
  });
  s += hLine(1600, 1867, 435, '#808080') + hLine(1600, 1917, 591, '#808080');
  [1659, 1718, 1777, 1837].forEach(x => { s += `<path class="ln" d="M${x + .5} 281V734" stroke="#808080" stroke-dasharray="1 2"/>`; });
  s += vLine(1599, 271, 735, '#808080') + vLine(1867, 281, 591, '#808080');
  s += hLine(1600, 1867, 280, '#808080', '1 1');
  for (let i = 1; i < tick.length; i++) {
    const a = tick[i - 1], b = tick[i];
    s += poly([a, b], b[1] <= a[1] ? R : '#000080');
  }
  // Intraday volume
  const env = [[1601, 38], [1607, 25], [1616, 18], [1627, 13], [1640, 9], [1660, 6], [1677, 7], [1700, 5], [1717, 6], [1733, 15], [1750, 14], [1763, 12], [1773, 6], [1783, 3], [1833, 3.5], [1860, 7]];
  const height = x => {
    for (let i = 1; i < env.length; i++) if (x <= env[i][0]) {
      const t = (x - env[i - 1][0]) / (env[i][0] - env[i - 1][0]);
      return env[i - 1][1] + t * (env[i][1] - env[i - 1][1]);
    }
    return 7;
  };
  let red = '', blk = '', seed = 7;
  for (let x = 1601; x <= 1860; x++) {
    seed = (seed * 137 + 59) % 1009;
    const r = seed / 1009, h = Math.max(2, Math.round(height(x) * (.45 + r * .75) * (seed % 17 === 0 ? 1.9 : 1)));
    const d = `M${x + .5} ${733 - h}V733`;
    if (seed % 2) red += d; else blk += d;
  }
  s += `<path class="ln" d="${red}" stroke="${R}"/><path class="ln" d="${blk}" stroke="#000"/>`;
  s += vLine(1600, 642, 733, R) + vLine(1864, 592, 733, R);
  s += hLine(1600, 1867, 733, '#808080') + vLine(1867, 591, 734, '#808080');
  s += text(1869, 602, '326333', '#808080') + text(1871, 731, '即時', B);
  put('mini', s);
}

function sideTabs() {
  const w = 319 / 6;
  let d = 'M0 .5H319M0 17.5H319';
  for (let i = 0; i <= 6; i++) {
    const x = i * w;
    if (i > 0) d += `M${x} .5L${x - 3} 17.5`;
    if (i < 6) d += `M${x + 1} .5L${x + 4} 17.5`;
  }
  document.getElementById('tabLines').setAttribute('d', d);
  document.getElementById('tabActive').setAttribute('d', `M${2 * w} .5H${3 * w}`);
}

mainChart(); dateAxis(); volPane(); rsiPane(); instPane(); miniChart(); sideTabs();
```
